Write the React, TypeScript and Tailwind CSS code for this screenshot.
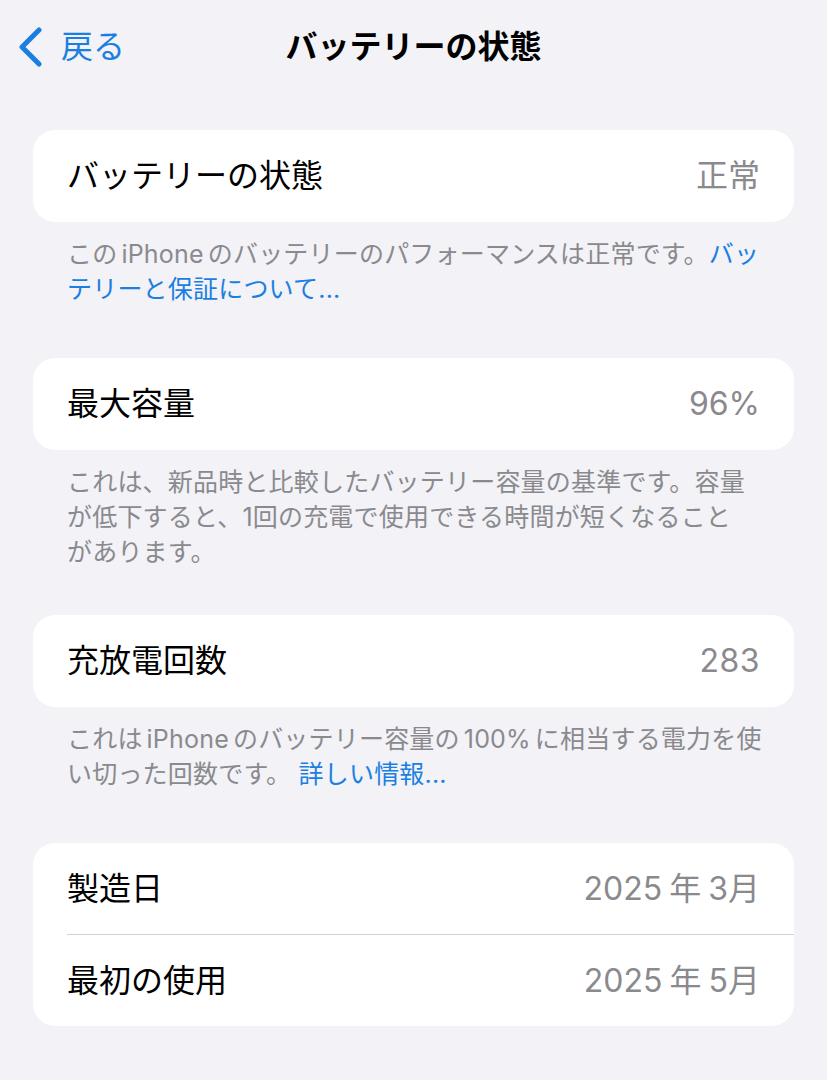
import React from "react";

const FONT = "font-[Inter,'Noto_Sans_CJK_JP',sans-serif]";

function Row({ label, value }: { label: string; value: React.ReactNode }) {
  return (
    <div className="flex h-[91px] items-center justify-between px-[34px]">
      <span className="text-[32px] text-black">{label}</span>
      <span className="text-[32px] text-[#8a8a8e]">{value}</span>
    </div>
  );
}

function Footer({ children }: { children: React.ReactNode }) {
  return (
    <div className="px-[34px] pt-[15px] text-[25px] leading-[35px] tracking-[0.2px] text-[#8a8a8e]">
      {children}
    </div>
  );
}

function Line({ children }: { children: React.ReactNode }) {
  return <span className="block whitespace-nowrap">{children}</span>;
}

const Latin = ({ children }: { children: React.ReactNode }) => (
  <span className="mx-[4px]">{children}</span>
);

export default function App() {
  return (
    <div className={`${FONT} min-h-screen bg-[#f2f2f7]`}>
      {/* nav bar */}
      <div className="grid h-[94px] grid-cols-[1fr_auto_1fr] items-center">
        <button type="button" className="flex items-center gap-[18px] pl-[17px] text-[#1a7fe0]">
          <svg width="26" height="40" viewBox="0 0 26 40" fill="none">
            <path
              d="M22 3 L5 20 L22 37"
              stroke="currentColor"
              strokeWidth={5}
              strokeLinecap="round"
              strokeLinejoin="round"
            />
          </svg>
          <span className="text-[32px]">戻る</span>
        </button>
        <h1 className="text-[32px] font-bold text-black">バッテリーの状態</h1>
        <div />
      </div>

      <main className="px-[33px] pt-[36px] pb-[54px]">
        <div className="rounded-[22px] bg-white">
          <div className="flex h-[92px] items-center justify-between px-[34px]">
            <span className="text-[32px] text-black">バッテリーの状態</span>
            <span className="text-[32px] text-[#8a8a8e]">正常</span>
          </div>
        </div>
        <Footer>
          <Line>
            この<Latin>iPhone</Latin>のバッテリーのパフォーマンスは正常です。
            <span className="text-[#1a7fe0]">バッ</span>
          </Line>
          <Line>
            <span className="text-[#1a7fe0]">テリーと保証について...</span>
          </Line>
        </Footer>

        <div className="mt-[51px] rounded-[22px] bg-white">
          <div className="flex h-[92px] items-center justify-between px-[34px]">
            <span className="text-[32px] text-black">最大容量</span>
            <span className="text-[32px] text-[#8a8a8e]">96%</span>
          </div>
        </div>
        <Footer>
          <Line>これは、新品時と比較したバッテリー容量の基準です。容量</Line>
          <Line>が低下すると、1回の充電で使用できる時間が短くなること</Line>
          <Line>があります。</Line>
        </Footer>

        <div className="mt-[45px] rounded-[22px] bg-white">
          <div className="flex h-[92px] items-center justify-between px-[34px]">
            <span className="text-[32px] text-black">充放電回数</span>
            <span className="text-[32px] tracking-[0.5px] text-[#8a8a8e]">283</span>
          </div>
        </div>
        <Footer>
          <Line>
            これは<Latin>iPhone</Latin>のバッテリー容量の<Latin>100%</Latin>に相当する電力を使
          </Line>
          <Line>
            い切った回数です。 <span className="text-[#1a7fe0]">詳しい情報...</span>
          </Line>
        </Footer>

        <div className="mt-[51px] overflow-hidden rounded-[22px] bg-white">
          <Row
            label="製造日"
            value={
              <>
                2025<span className="mx-[7px]">年</span>3月
              </>
            }
          />
          <div className="ml-[34px] h-px bg-[#d1d1d6]" />
          <Row
            label="最初の使用"
            value={
              <>
                2025<span className="mx-[7px]">年</span>5月
              </>
            }
          />
        </div>
      </main>
    </div>
  );
}
